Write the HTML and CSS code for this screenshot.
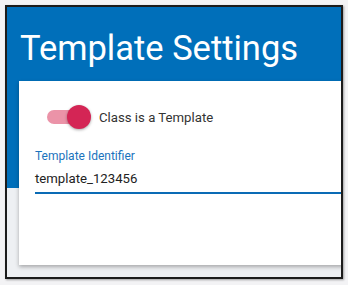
FILE: index.html
```html
<!DOCTYPE html>
<html>
<head>
<meta charset="utf-8">
<link rel="stylesheet" href="styles.css">
</head>
<body>
<div class="frame">
  <h1 class="title">Template Settings</h1>
  <div class="card">
    <label class="switch-row">
      <span class="switch"><span class="track"></span><span class="thumb"></span></span>
      <span class="switch-label">Class is a Template</span>
    </label>
    <div class="field">
      <div class="field-label">Template Identifier</div>
      <div class="field-input">template_123456</div>
    </div>
  </div>
</div>
</body>
</html>
```
FILE: styles.css
```css
html, body { margin: 0; padding: 0; }
body {
  background: #f3f3f5;
  padding: 5px 0 0 5px;
  font-family: Roboto, "Noto Sans", sans-serif;
  width: 348px;
  height: 285px;
  box-sizing: border-box;
}
.frame {
  width: 338px;
  height: 274px;
  box-sizing: border-box;
  border: 2px solid #1c1c1c;
  background: linear-gradient(#006fba 0, #006fba 181px, #eef0f3 181px);
  overflow: hidden;
  box-shadow: 1px 1px 2px rgba(0,0,0,0.35);
}
.title {
  margin: 0;
  height: 74px;
  box-sizing: border-box;
  padding: 21px 0 0 13px;
  font-weight: 400;
  font-size: 34.5px;
  line-height: 40px;
  color: #fff;
}
.card {
  margin-left: 12px;
  width: 340px;
  height: 184px;
  background: #fff;
  box-shadow: 0 2px 4px rgba(0,0,0,0.3);
  padding: 24px 0 0 16px;
  box-sizing: border-box;
}
.switch-row {
  display: flex;
  align-items: center;
  height: 24px;
  margin-left: 12px;
}
.switch {
  position: relative;
  width: 44px;
  height: 24px;
}
.track {
  position: absolute;
  left: 0;
  top: 5px;
  width: 34px;
  height: 14px;
  border-radius: 7px;
  background: #eb93a8;
}
.thumb {
  position: absolute;
  left: 20px;
  top: 0;
  width: 24px;
  height: 24px;
  border-radius: 50%;
  background: #d42555;
  box-shadow: 0 1px 3px rgba(0,0,0,0.35);
}
.switch-label {
  margin-left: 8px;
  font-size: 13.2px;
  color: #333;
}
.field {
  margin-top: 20px;
}
.field-label {
  font-size: 12px;
  line-height: 14px;
  color: #1a73bd;
}
.field-input {
  margin-top: 7px;
  font-size: 13.2px;
  line-height: 18px;
  padding-bottom: 4px;
  color: #222;
  border-bottom: 2px solid #0a6bb5;
}
```
